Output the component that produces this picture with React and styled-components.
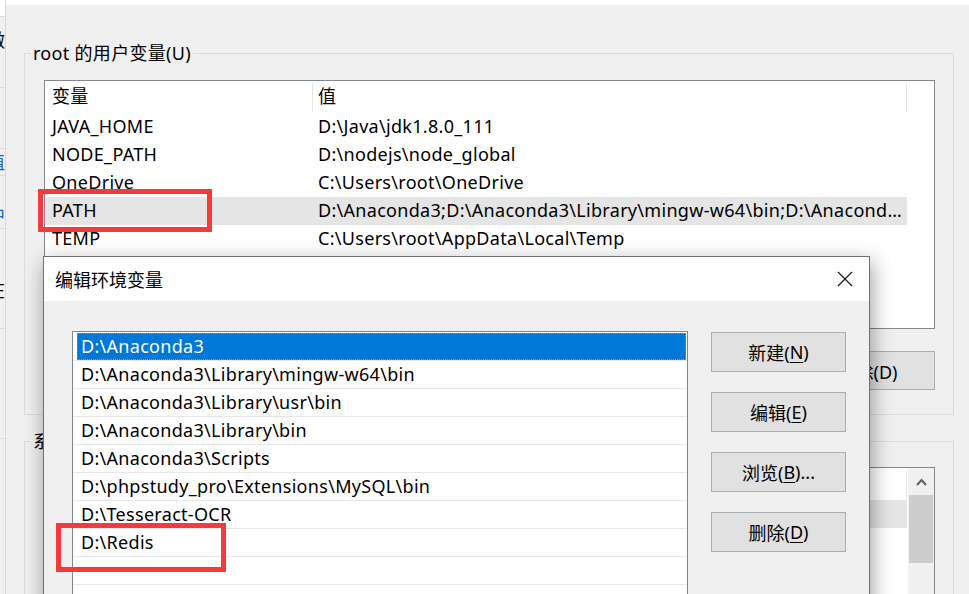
import React from "react";
import styled, { createGlobalStyle } from "styled-components";

const GlobalStyle = createGlobalStyle`
  *, *::before, *::after { box-sizing: border-box; }
  html, body { margin: 0; padding: 0; }
  body {
    width: 969px;
    height: 594px;
    overflow: hidden;
    background: #f0f0f0;
    font-family: "Noto Sans", "Noto Sans CJK SC", sans-serif;
    font-size: 18px;
    letter-spacing: 0.3px;
    color: #000;
  }
`;

const Screen = styled.div`
  position: relative;
  display: flex;
  width: 969px;
  height: 594px;
  overflow: hidden;
`;

/* sliver of another window on the far left */
const SideStrip = styled.div`
  flex: none;
  width: 6px;
  border-right: 1px solid #d9d9d9;
  display: flex;
  flex-direction: column;
  overflow: hidden;
`;

const StripCell = styled.div`
  flex: none;
  height: ${(p) => p.$h}px;
  padding-top: ${(p) => p.$pt || 0}px;
  border-bottom: 1px solid #dcdcdc;
  background: ${(p) => p.$bg || "transparent"};
  color: ${(p) => (p.$blue ? "#1a63c9" : "#000")};
  white-space: nowrap;
  line-height: 18px;
  font-size: 18px;

  span {
    display: inline-block;
    margin-left: -13px;
  }
`;

const MainWindow = styled.div`
  flex: 1;
  display: flex;
  flex-direction: column;
  background: #f0f0f0;
`;

const TopEdge = styled.div`
  flex: none;
  height: 5px;
  background: #fff;
`;

const Body = styled.div`
  padding: 48px 15px 0 18px;
`;

const GroupBox = styled.div`
  border: 1px solid #dcdcdc;
  padding: 0 18px ${(p) => p.$pb}px 19px;
  margin-bottom: 26px;
`;

const GroupTitle = styled.div`
  width: fit-content;
  margin: -12px 0 0 -13px;
  padding: 0 2px;
  line-height: 22px;
  background: #f0f0f0;
`;

const ListView = styled.div`
  margin-top: ${(p) => p.$mt}px;
  height: ${(p) => p.$h}px;
  border: 1px solid #828790;
  background: #fff;
  display: flex;
  overflow: hidden;
`;

const ListContent = styled.div`
  flex: 1;
  display: flex;
  flex-direction: column;
`;

const HeaderRow = styled.div`
  display: flex;
  height: 32px;
  line-height: 31px;
`;

const HeaderCell = styled.div`
  width: ${(p) => p.$w}px;
  padding-left: ${(p) => p.$pl}px;
  white-space: nowrap;
`;

const ColDivider = styled.div`
  width: 1px;
  margin: 2px 0 1px;
  background: #e5e5e5;
`;

const DataRow = styled.div`
  display: flex;
  width: 862px;
  height: 28px;
  line-height: 26px;
  background: ${(p) => (p.$hover ? "#e5e5e5" : "transparent")};
`;

const DataCell = styled.div`
  width: ${(p) => p.$w}px;
  padding-left: ${(p) => p.$pl}px;
  padding-right: ${(p) => p.$pr || 0}px;
  white-space: nowrap;
  overflow: hidden;
  text-overflow: ellipsis;
`;

const Scrollbar = styled.div`
  flex: none;
  width: 26px;
  background: #f0f0f0;
  display: flex;
  flex-direction: column;
  align-items: center;
`;

const ScrollArrow = styled.div`
  height: 27px;
  display: flex;
  align-items: center;
  justify-content: center;
`;

const ScrollThumb = styled.div`
  width: 24px;
  height: 68px;
  background: #cdcdcd;
`;

const ButtonRow = styled.div`
  margin-top: 22px;
  display: flex;
  justify-content: flex-end;
  gap: 16px;
`;

const WinButton = styled.div`
  width: 135px;
  height: ${(p) => p.$h || 39}px;
  border: 1px solid #adadad;
  background: #e1e1e1;
  display: flex;
  align-items: center;
  justify-content: center;
  white-space: nowrap;
  letter-spacing: 0;
`;

const Key = styled.span`
  text-decoration: underline;
  text-underline-offset: 3px;
  text-decoration-thickness: 1px;
`;

/* the edit dialog on top */
const Dialog = styled.div`
  position: absolute;
  left: 43px;
  top: 256px;
  width: 827px;
  height: 420px;
  border: 1px solid #707070;
  background: #f0f0f0;
  box-shadow: 2px 6px 20px rgba(0, 0, 0, 0.38);
  display: flex;
  flex-direction: column;
  z-index: 2;
`;

const TitleBar = styled.div`
  flex: none;
  height: 44px;
  background: #fff;
  display: flex;
  align-items: center;
  justify-content: space-between;
  padding: 0 16px 0 11px;
  letter-spacing: 0;
`;

const DialogBody = styled.div`
  flex: 1;
  display: flex;
  gap: 23px;
  padding: 30px 23px 0 28px;
`;

const PathList = styled.div`
  width: 616px;
  border: 1px solid #828790;
  background: #fff;
  padding-top: 1px;
  display: flex;
  flex-direction: column;
`;

const PathRow = styled.div`
  flex: none;
  height: 28px;
  padding: 0 1px 0 4px;
  border-bottom: 1px solid #e8e8e8;
  display: flex;
`;

const PathText = styled.div`
  flex: 1;
  padding-left: 4px;
  line-height: 26px;
  white-space: nowrap;
  background: ${(p) => (p.$selected ? "#0078d7" : "transparent")};
  color: ${(p) => (p.$selected ? "#fff" : "#000")};
  outline: ${(p) => (p.$selected ? "1px dotted #d08a38" : "none")};
  outline-offset: -1px;
`;

const ButtonColumn = styled.div`
  display: flex;
  flex-direction: column;
  gap: 20px;
  margin-top: 1px;
`;

const RedBox = styled.div`
  position: absolute;
  left: ${(p) => p.$x}px;
  top: ${(p) => p.$y}px;
  width: ${(p) => p.$w}px;
  height: ${(p) => p.$h}px;
  border: 5px solid #f43b3b;
  z-index: 3;
`;

const userVars = [
  ["JAVA_HOME", "D:\\Java\\jdk1.8.0_111"],
  ["NODE_PATH", "D:\\nodejs\\node_global"],
  ["OneDrive", "C:\\Users\\root\\OneDrive"],
  ["PATH", "D:\\Anaconda3;D:\\Anaconda3\\Library\\mingw-w64\\bin;D:\\Anaconda3\\Library\\usr\\bin;D:\\Anaconda3\\Library\\bin"],
  ["TEMP", "C:\\Users\\root\\AppData\\Local\\Temp"],
  ["TMP", "C:\\Users\\root\\AppData\\Local\\Temp"],
];

const sysVars = [
  ["ComSpec", "C:\\Windows\\system32\\cmd.exe"],
  ["DriverData", "C:\\Windows\\System32\\Drivers\\DriverData"],
  ["NUMBER_OF_PROCESSORS", "8"],
  ["OS", "Windows_NT"],
];

const paths = [
  "D:\\Anaconda3",
  "D:\\Anaconda3\\Library\\mingw-w64\\bin",
  "D:\\Anaconda3\\Library\\usr\\bin",
  "D:\\Anaconda3\\Library\\bin",
  "D:\\Anaconda3\\Scripts",
  "D:\\phpstudy_pro\\Extensions\\MySQL\\bin",
  "D:\\Tesseract-OCR",
  "D:\\Redis",
  "",
  "",
];

const stripCells = [
  { h: 17, bg: "#fff" },
  { h: 71, g: "做", pt: 14 },
  { h: 61 },
  { h: 27, g: "值", pt: 4, blue: true },
  { h: 53, g: "中", pt: 30, blue: true },
  { h: 100, g: "在", pt: 52 },
  { h: 110 },
  { h: 160 },
];

function CloseIcon() {
  return (
    <svg width="16" height="16" viewBox="0 0 16 16">
      <path d="M1 1 L15 15 M15 1 L1 15" stroke="#1a1a1a" strokeWidth="1.2" fill="none" />
    </svg>
  );
}

function ChevronUp() {
  return (
    <svg width="11" height="8" viewBox="0 0 11 8">
      <path d="M1 7 L5.5 2 L10 7" stroke="#606060" strokeWidth="2" fill="none" />
    </svg>
  );
}

function VarHeader() {
  return (
    <HeaderRow>
      <HeaderCell $w={267} $pl={7}>变量</HeaderCell>
      <ColDivider />
      <HeaderCell $w={593} $pl={5}>值</HeaderCell>
      <ColDivider />
    </HeaderRow>
  );
}

export default function App() {
  return (
    <>
      <GlobalStyle />
      <Screen>
        <SideStrip>
          {stripCells.map((c, i) => (
            <StripCell key={i} $h={c.h} $pt={c.pt} $bg={c.bg} $blue={c.blue}>
              {c.g && <span>{c.g}</span>}
            </StripCell>
          ))}
        </SideStrip>

        <MainWindow>
          <TopEdge />
          <Body>
            <GroupBox $pb={24}>
              <GroupTitle>root 的用户变量(U)</GroupTitle>
              <ListView $mt={16} $h={249}>
                <ListContent>
                  <VarHeader />
                  {userVars.map(([name, value]) => (
                    <DataRow key={name} $hover={name === "PATH"}>
                      <DataCell $w={268} $pl={7}>{name}</DataCell>
                      <DataCell $w={594} $pl={5} $pr={4}>{value}</DataCell>
                    </DataRow>
                  ))}
                </ListContent>
              </ListView>
              <ButtonRow>
                <WinButton>新建(N)...</WinButton>
                <WinButton>编辑(E)...</WinButton>
                <WinButton>删除(D)</WinButton>
              </ButtonRow>
            </GroupBox>

            <GroupBox $pb={24}>
              <GroupTitle>系统变量(S)</GroupTitle>
              <ListView $mt={15} $h={200}>
                <ListContent>
                  <VarHeader />
                  {sysVars.map(([name, value], i) => (
                    <DataRow key={name} $hover={i === 0}>
                      <DataCell $w={268} $pl={7}>{name}</DataCell>
                      <DataCell $w={594} $pl={5}>{value}</DataCell>
                    </DataRow>
                  ))}
                </ListContent>
                <Scrollbar>
                  <ScrollArrow>
                    <ChevronUp />
                  </ScrollArrow>
                  <ScrollThumb />
                </Scrollbar>
              </ListView>
            </GroupBox>
          </Body>
        </MainWindow>

        <Dialog>
          <TitleBar>
            <span>编辑环境变量</span>
            <CloseIcon />
          </TitleBar>
          <DialogBody>
            <PathList>
              {paths.map((p, i) => (
                <PathRow key={i}>
                  <PathText $selected={i === 0}>{p}</PathText>
                </PathRow>
              ))}
            </PathList>
            <ButtonColumn>
              <WinButton $h={40}>新建(<Key>N</Key>)</WinButton>
              <WinButton $h={40}>编辑(<Key>E</Key>)</WinButton>
              <WinButton $h={40}>浏览(<Key>B</Key>)...</WinButton>
              <WinButton $h={40}>删除(<Key>D</Key>)</WinButton>
            </ButtonColumn>
          </DialogBody>
        </Dialog>

        <RedBox $x={38} $y={189} $w={174} $h={43} />
        <RedBox $x={56} $y={523} $w={170} $h={49} />
      </Screen>
    </>
  );
}
